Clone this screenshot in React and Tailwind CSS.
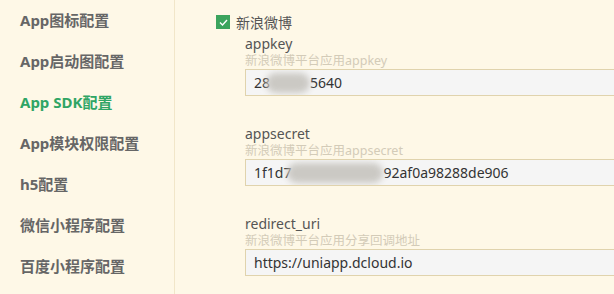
import React from "react";

const menu = [
  "App图标配置",
  "App启动图配置",
  "App SDK配置",
  "App模块权限配置",
  "h5配置",
  "微信小程序配置",
  "百度小程序配置",
];

const Blur = ({ w, ml = 0 }) => (
  <span
    className="inline-block h-[20px] align-middle rounded-full bg-[#cbc9c4] blur-[3px]"
    style={{ width: w, marginLeft: ml }}
  />
);

const Field = ({ label, hint, children, className = "" }) => (
  <div className={className}>
    <div className="h-[18px] leading-[18px] text-[14px] text-[#555]">{label}</div>
    <div className="h-[16px] leading-[16px] text-[12.5px] text-[#d3cbb8]">{hint}</div>
    <div className="h-[27px] w-[400px] border border-[#e0d3ad] bg-[#f5f5f5] pl-[8px] flex items-center text-[14px] text-[#333] whitespace-nowrap overflow-hidden">
      {children}
    </div>
  </div>
);

export default function App() {
  return (
    <div
      className="w-[614px] h-[294px] overflow-hidden bg-[#fef8e7] flex"
      style={{ fontFamily: '"Noto Sans", "Noto Sans CJK SC", sans-serif' }}
    >
      {/* sidebar */}
      <div className="w-[175px] shrink-0 border-r border-[#f1e6c9] pl-[20px]">
        {menu.map((m, i) => (
          <div
            key={m}
            className={
              "h-[41px] flex items-center text-[15px] font-bold " +
              (i === 2 ? "text-[#2fa565]" : "text-[#666]")
            }
          >
            {m}
          </div>
        ))}
      </div>

      {/* content */}
      <div className="flex-1 pl-[41px] pt-[14px]">
        <div className="h-[16px] flex items-center gap-[6px]">
          <span className="w-[14px] h-[14px] bg-[#3ca45d] flex items-center justify-center">
            <svg width="9" height="7" viewBox="0 0 9 7" fill="none">
              <path d="M1 3.5 L3.5 6 L8 1" stroke="#fff" strokeWidth="1.4" />
            </svg>
          </span>
          <span className="text-[14px] text-[#555]">新浪微博</span>
        </div>

        <div className="pl-[29px]">
          <Field label="appkey" hint="新浪微博平台应用appkey" className="mt-[5px]">
            <span>28</span>
            <Blur w={44} ml={-4} />
            <span>5640</span>
          </Field>
          <Field label="appsecret" hint="新浪微博平台应用appsecret" className="mt-[29px]">
            <span>1f1d7</span>
            <Blur w={96} ml={-4} />
            <span>92af0a98288de906</span>
          </Field>
          <Field label="redirect_uri" hint="新浪微博平台应用分享回调地址" className="mt-[29px]">
            <span>https://uniapp.dcloud.io</span>
          </Field>
        </div>
      </div>
    </div>
  );
}
